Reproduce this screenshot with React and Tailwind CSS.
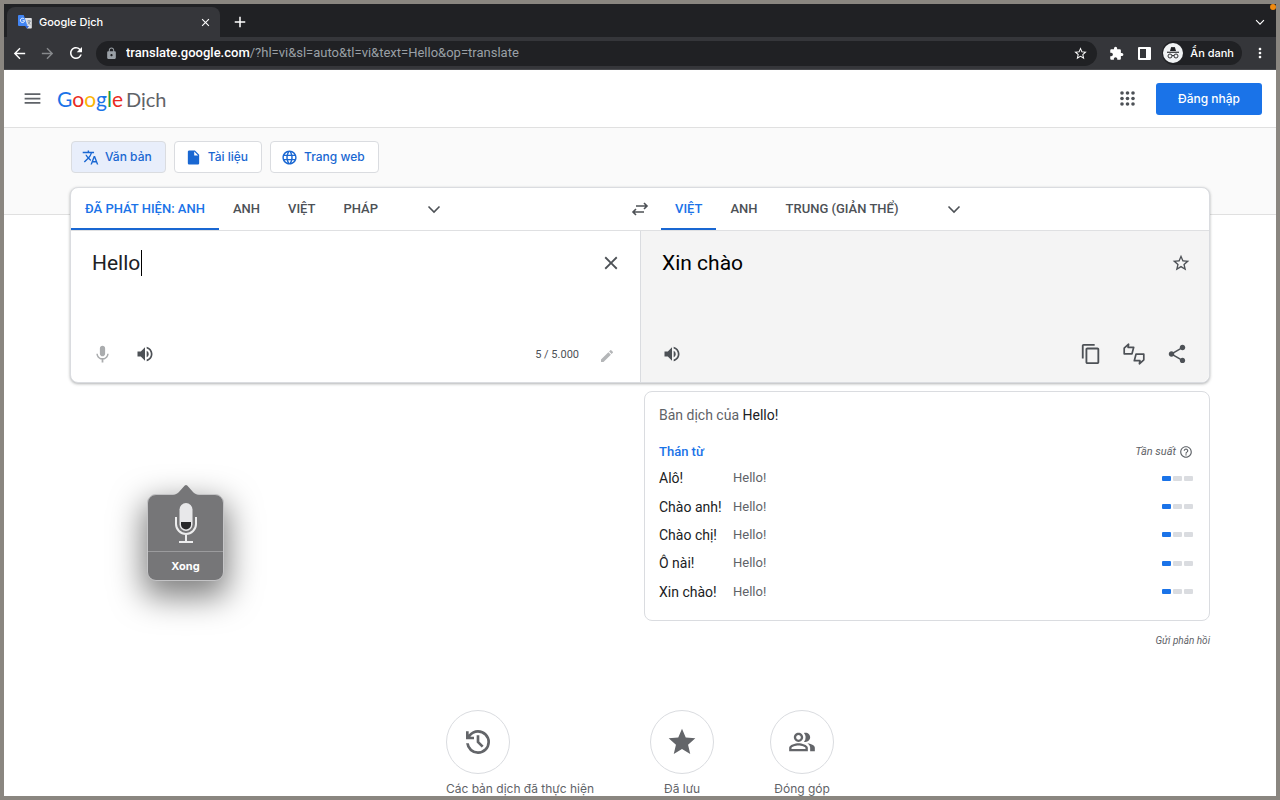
import React from "react";
import {
  MdAdd, MdArrowBack, MdArrowForward, MdClose, MdContentCopy, MdEdit,
  MdExtension, MdHelpOutline, MdInsertDriveFile, MdLanguage, MdLock, MdMenu, MdMic,
  MdMoreVert, MdOutlinePeopleAlt, MdRefresh, MdShare, MdStar, MdStarBorder,
  MdTranslate, MdVolumeUp,
} from "react-icons/md";

const words = ["Alô!", "Chào anh!", "Chào chị!", "Ô nài!", "Xin chào!"];

function IconButton({ label, className = "", children }) {
  return (
    <button type="button" aria-label={label} className={`flex shrink-0 items-center justify-center ${className}`}>
      {children}
    </button>
  );
}

function TranslateFavicon() {
  return (
    <svg width="14" height="14" viewBox="0 0 28 28" aria-hidden="true">
      <path d="M12 6h14a1.600 1.600 0 0 1 1.600 1.600v18a1.600 1.600 0 0 1-1.600 1.600H18z" fill="#dfe1e5" />
      <path d="M14 22l4 5.500 4-5.500z" fill="#3367d6" />
      <path d="M2 0h9.500l7.500 22H2a2 2 0 0 1-2-2V2a2 2 0 0 1 2-2z" fill="#4285f4" />
      <path d="M12.500 8.200a4.300 4.300 0 1 0 .8 3.300H9" fill="none" stroke="#fff" strokeWidth="1.900" />
      <path d="M18.500 12h7M22 10v2M24.500 12c-.8 3-3 5.500-5 7M20 14c1 2.500 3 4 5 5.500" fill="none" stroke="#6f7b8a" strokeWidth="1.400" />
    </svg>
  );
}

function IncognitoIcon() {
  return (
    <svg width="20" height="20" viewBox="0 0 40 40" aria-hidden="true">
      <circle cx="20" cy="20" r="20" fill="#f1f3f4" />
      <path d="M14 16l2-7c.3-1 1-1.300 2-1l2 .6 2-.6c1-.3 1.700 0 2 1l2 7z" fill="#202124" />
      <path d="M8 18.500h24" stroke="#202124" strokeWidth="2.200" />
      <g fill="none" stroke="#202124" strokeWidth="1.800">
        <circle cx="14" cy="26" r="4" />
        <circle cx="26" cy="26" r="4" />
        <path d="M18 25.500q2-1.500 4 0" />
      </g>
    </svg>
  );
}

function SwapIcon() {
  return (
    <svg width="18" height="14" viewBox="0 0 18 14" fill="none" stroke="#4d5156" strokeWidth="1.600" aria-hidden="true">
      <path d="M5 4h11M13 1l3 3-3 3M13 10H2M5 7l-3 3 3 3" />
    </svg>
  );
}

function AppsIcon() {
  const steps = [2, 7.5, 13];
  return (
    <svg width="15" height="15" viewBox="0 0 15 15" fill="currentColor" aria-hidden="true">
      {steps.map((y) => steps.map((x) => <circle key={`${x}-${y}`} cx={x} cy={y} r="1.800" />))}
    </svg>
  );
}

function HistoryIcon() {
  return (
    <svg width="32" height="32" viewBox="0 0 24 24" fill="currentColor" aria-hidden="true">
      <path d="M12 21q-3.450 0-6.012-2.288T3.050 13H5.100q.35 2.600 2.313 4.300T12 19q2.925 0 4.963-2.037T19 12t-2.037-4.963T12 5q-1.725 0-3.225.8T6.250 8H9v2H3V4h2v2.350q1.275-1.600 3.113-2.475T12 3q1.875 0 3.513.713t2.850 1.924 1.925 2.850T21 12t-.712 3.513-1.925 2.850-2.850 1.925T12 21m2.800-4.800L11 12.400V7h2v4.600l3.200 3.200z" />
    </svg>
  );
}

function RateIcon() {
  return (
    <svg width="22" height="22" viewBox="0 0 22 22" fill="none" stroke="currentColor" strokeWidth="1.700" strokeLinejoin="round" aria-hidden="true">
      <path d="M1.200 5.200L5.600 1.200 5.100 4.300H10.700L9 10.800H1.200z" />
      <path d="M20.800 16.800L16.400 20.800 16.900 17.700H11.300L13 11.200H20.800z" />
    </svg>
  );
}

function Chevron({ className }) {
  return (
    <svg width="14" height="14" viewBox="0 0 14 14" fill="none" stroke="currentColor" strokeWidth="1.600" className={className} aria-hidden="true">
      <path d="M1.500 4.500L7 10l5.500-5.500" />
    </svg>
  );
}

function BrowserChrome() {
  return (
    <div className="bg-[#202124] font-['Inter',sans-serif] text-white">
      <div className="flex h-[33px] items-end justify-between pl-[3px]">
        <div className="flex h-full items-end">
          <div className="flex h-[30px] w-[213px] items-center rounded-t-lg bg-[#35363a] pr-2 pl-[11px]">
            <TranslateFavicon />
            <span className="ml-[7px] flex-1 text-[11px] font-medium">Google Dịch</span>
            <IconButton label="Đóng thẻ"><MdClose size={13} /></IconButton>
          </div>
          <IconButton label="Thẻ mới" className="ml-[11px] h-[30px]"><MdAdd size={18} /></IconButton>
        </div>
        <IconButton label="Tìm thẻ" className="mr-[11px] h-[30px]">
          <Chevron className="h-[10px] w-[10px]" />
        </IconButton>
      </div>
      <div className="flex h-[33px] items-center border-b border-[#4a4b4f] bg-[#35363a] pr-2 pl-[7px]">
        <IconButton label="Quay lại"><MdArrowBack size={17} /></IconButton>
        <IconButton label="Tiến" className="ml-[11px] text-[#87898c]"><MdArrowForward size={17} /></IconButton>
        <IconButton label="Tải lại" className="ml-[11px]"><MdRefresh size={18} /></IconButton>
        <div className="ml-[11px] flex h-[25px] min-w-0 flex-1 items-center rounded-full bg-[#202124] px-[9px]">
          <MdLock size={13} className="text-[#9aa0a6]" />
          <p className="ml-2 flex-1 truncate font-['Roboto',sans-serif] text-[13px] text-[#9aa0a6]">
            <span className="font-medium text-white">translate.google.com</span>/?hl=vi&amp;sl=auto&amp;tl=vi&amp;text=Hello&amp;op=translate
          </p>
          <IconButton label="Đánh dấu trang"><MdStarBorder size={15} /></IconButton>
        </div>
        <IconButton label="Tiện ích" className="ml-3"><MdExtension size={15} /></IconButton>
        <IconButton label="Bảng điều khiển bên" className="ml-[14px]">
          <svg width="13" height="13" viewBox="0 0 13 13" aria-hidden="true">
            <rect width="13" height="13" rx="1" fill="#fff" />
            <rect x="2" y="2" width="6" height="9" fill="#35363a" />
          </svg>
        </IconButton>
        <button type="button" className="ml-[11px] flex h-[24px] items-center gap-[7px] rounded-full bg-[#202124] pr-2 pl-px text-[11px] font-medium">
          <IncognitoIcon />Ẩn danh
        </button>
        <IconButton label="Tùy chọn khác" className="ml-[10px]"><MdMoreVert size={16} /></IconButton>
      </div>
    </div>
  );
}

function ModeButton({ icon, active, children }) {
  return (
    <button
      type="button"
      className={`flex h-8 items-center gap-[6px] rounded-[4px] border border-[#dadce0] pr-[13px] pl-[10px] font-['Inter',sans-serif] text-[12px] font-medium text-[#1967d2] ${active ? "bg-[#e8eefb]" : "bg-white"}`}
    >
      {icon}{children}
    </button>
  );
}

function LanguageTab({ active, children }) {
  return (
    <button
      type="button"
      role="tab"
      aria-selected={!!active}
      className={`h-[42px] border-b-2 px-[14px] pt-[2px] text-[13px] font-medium whitespace-nowrap ${active ? "border-[#1967d2] text-[#1a73e8]" : "border-transparent text-[#4d5156]"}`}
    >
      {children}
    </button>
  );
}

function TranslatorCard() {
  return (
    <section className="relative -mt-7 rounded-lg border border-[#dadce0] bg-white text-[#4d5156] shadow-[0_1px_3px_rgba(60,64,67,0.4)]">
      <div className="flex h-[43px] border-b border-[#dfe0e2]">
        <div role="tablist" aria-label="Ngôn ngữ nguồn" className="flex min-w-0 flex-1">
          <LanguageTab active>ĐÃ PHÁT HIỆN: ANH</LanguageTab>
          <LanguageTab>ANH</LanguageTab>
          <LanguageTab>VIỆT</LanguageTab>
          <LanguageTab>PHÁP</LanguageTab>
          <IconButton label="Thêm ngôn ngữ nguồn" className="ml-[35px] h-[42px]"><Chevron /></IconButton>
        </div>
        <IconButton label="Hoán đổi ngôn ngữ" className="w-[42px]"><SwapIcon /></IconButton>
        <div role="tablist" aria-label="Ngôn ngữ đích" className="flex min-w-0 flex-1">
          <LanguageTab active>VIỆT</LanguageTab>
          <LanguageTab>ANH</LanguageTab>
          <LanguageTab>TRUNG (GIẢN THỂ)</LanguageTab>
          <IconButton label="Thêm ngôn ngữ đích" className="ml-[35px] h-[42px]"><Chevron /></IconButton>
        </div>
      </div>
      <div className="grid min-h-[151px] grid-cols-2">
        <div className="flex flex-col justify-between">
          <div className="relative flex h-16 items-center pr-[18px] pl-[21px]">
            <textarea
              aria-label="Văn bản nguồn"
              rows={1}
              defaultValue="Hello"
              className="h-7 min-w-0 flex-1 resize-none overflow-hidden text-[21px] leading-7 text-[#202124] outline-none"
            />
            <span className="absolute top-[19px] left-[70px] h-[26px] w-px bg-black" />
            <IconButton label="Xóa văn bản nguồn"><MdClose size={22} /></IconButton>
          </div>
          <div className="flex h-14 items-center pr-[25px] pl-[21px]">
            <IconButton label="Dịch bằng giọng nói" className="text-[#aaacae]"><MdMic size={21} /></IconButton>
            <IconButton label="Nghe văn bản nguồn" className="ml-[22px]"><MdVolumeUp size={20} /></IconButton>
            <span className="ml-auto pt-[3px] text-[11px]">5 / 5.000</span>
            <IconButton label="Viết tay" className="ml-5 pt-[3px] text-[#b4b6b8]"><MdEdit size={16} /></IconButton>
          </div>
        </div>
        <div className="flex flex-col justify-between rounded-br-lg border-l border-[#dadce0] bg-[#f4f4f4]">
          <div className="flex h-16 items-center justify-between pr-[18px] pl-[21px]">
            <p className="text-[21px] leading-7 text-black">Xin chào</p>
            <IconButton label="Lưu bản dịch"><MdStarBorder size={20} /></IconButton>
          </div>
          <div className="flex h-14 items-center gap-[21px] pr-[21px] pl-[21px]">
            <IconButton label="Nghe bản dịch" className="mr-auto"><MdVolumeUp size={20} /></IconButton>
            <IconButton label="Sao chép bản dịch"><MdContentCopy size={22} /></IconButton>
            <IconButton label="Đánh giá bản dịch"><RateIcon /></IconButton>
            <IconButton label="Chia sẻ bản dịch"><MdShare size={22} /></IconButton>
          </div>
        </div>
      </div>
    </section>
  );
}

function Results() {
  return (
    <div className="mt-2 ml-auto w-1/2 pl-1">
      <section className="rounded-lg border border-[#dadce0] pt-[13px] pr-4 pb-[14px] pl-[14px]">
        <h2 className="text-[14px] leading-5 text-[#5f6368]">Bản dịch của <span className="text-[#202124]">Hello!</span></h2>
        <table className="mt-[15px] h-[166px] w-full text-left">
          <thead>
            <tr className="h-6">
              <th colSpan={2} className="p-0 text-[13px] leading-5 font-medium text-[#1a73e8]">Thán từ</th>
              <th className="p-0 text-[11px] leading-4 font-normal text-[#5f6368] italic">
                <span className="flex items-center justify-end gap-[3px]">Tần suất <MdHelpOutline size={14} /></span>
              </th>
            </tr>
          </thead>
          <tbody>
            {words.map((word) => (
              <tr key={word} className="h-7">
                <td className="w-[74px] p-0 text-[14px] leading-5 whitespace-nowrap text-[#202124]">{word}</td>
                <td className="p-0 text-[13px] leading-5 text-[#5f6368]">Hello!</td>
                <td className="p-0">
                  <div role="img" aria-label="Ít gặp" className="flex justify-end gap-[2px]">
                    <span className="h-[5px] w-[9px] rounded-[1px] bg-[#1a73e8]" />
                    <span className="h-[5px] w-[9px] rounded-[1px] bg-[#dadce0]" />
                    <span className="h-[5px] w-[9px] rounded-[1px] bg-[#dadce0]" />
                  </div>
                </td>
              </tr>
            ))}
          </tbody>
        </table>
      </section>
      <a href="#feedback" className="mt-[13px] block text-right text-[10px] leading-[14px] text-[#5f6368] italic">Gửi phản hồi</a>
    </div>
  );
}

function Shortcut({ icon, label, start }) {
  return (
    <a href="#shortcut" className={`flex flex-col gap-2 ${start ? "items-start" : "w-16 items-center"}`}>
      <span className="flex h-16 w-16 items-center justify-center rounded-full border border-[#dadce0] text-[#636569]">{icon}</span>
      <span className="font-['Inter',sans-serif] text-[12px] leading-[14px] whitespace-nowrap text-[#5f6368]">{label}</span>
    </a>
  );
}

function DictationPopup() {
  return (
    <div className="absolute top-[490px] left-[143px] w-[77px] rounded-[9px] border border-[#c4c4c6] bg-[#767678] text-white shadow-[0_12px_32px_4px_rgba(0,0,0,0.5)]">
      <svg className="absolute -top-[11px] left-[25px]" width="26" height="12" viewBox="0 0 26 12" aria-hidden="true">
        <path d="M0 12V11C5 10.500 6.500 7 11.800 1.500Q13 .5 14.200 1.500C19.500 7 21 10.500 26 11V12z" fill="#767678" />
      </svg>
      <div className="flex h-[56px] items-center justify-center">
        <svg width="24" height="42" viewBox="0 0 24 42" aria-hidden="true">
          <rect x="5.500" y="1" width="13" height="28" rx="6.500" fill="#e8e8ea" />
          <path d="M7 20h10v2.500a5 5 0 0 1-10 0z" fill="#28282a" />
          <path d="M2 15v7a10 10 0 0 0 20 0v-7M12 32v7M5 40h14" fill="none" stroke="#ededee" strokeWidth="2" />
        </svg>
      </div>
      <button type="button" className="h-[29px] w-full border-t border-[#9b9b9d] font-['Inter',sans-serif] text-[11px] font-bold">Xong</button>
    </div>
  );
}

export default function App() {
  return (
    <div className="relative flex min-h-screen flex-col border-4 border-[#8a8680] bg-white font-['Roboto',sans-serif]">
      <span className="absolute top-0 right-0 h-[6px] w-[6px] rounded-full bg-[#f08a10]" />
      <BrowserChrome />
      <header className="flex h-[58px] items-center border-b border-[#e0e0e0] pr-[14px] pl-[18px]">
        <IconButton label="Trình đơn chính" className="text-[#5f6368]"><MdMenu size={21} /></IconButton>
        <a href="#home" className="ml-[14px] flex items-baseline gap-[3px] font-['Lato','Inter',sans-serif] text-[21px] leading-7">
          <span>
            <span className="text-[#1a73e8]">G</span><span className="text-[#ea2b1f]">o</span><span className="text-[#fbb404]">o</span><span className="text-[#1a73e8]">g</span><span className="text-[#1e9b40]">l</span><span className="text-[#ea2b1f]">e</span>
          </span>
          <span className="text-[20px] text-[#5f6368]">Dịch</span>
        </a>
        <IconButton label="Các ứng dụng của Google" className="ml-auto text-[#4d5156]"><AppsIcon /></IconButton>
        <button type="button" className="ml-[21px] h-8 rounded-[3px] bg-[#1a73e8] px-[22px] font-['Inter',sans-serif] text-[12px] font-medium text-white">Đăng nhập</button>
      </header>
      <nav aria-label="Kiểu dịch" className="flex gap-2 border-b border-[#e0e0e0] bg-[#fafafa] px-[67px] pt-[13px] pb-[41px]">
        <ModeButton active icon={<MdTranslate size={17} />}>Văn bản</ModeButton>
        <ModeButton icon={<MdInsertDriveFile size={17} />}>Tài liệu</ModeButton>
        <ModeButton icon={<MdLanguage size={17} />}>Trang web</ModeButton>
      </nav>
      <main className="px-[66px]">
        <TranslatorCard />
        <Results />
        <div className="mt-[62px] flex justify-center gap-14">
          <Shortcut start icon={<HistoryIcon />} label="Các bản dịch đã thực hiện" />
          <Shortcut icon={<MdStar size={32} />} label="Đã lưu" />
          <Shortcut icon={<MdOutlinePeopleAlt size={28} />} label="Đóng góp" />
        </div>
      </main>
      <DictationPopup />
    </div>
  );
}
